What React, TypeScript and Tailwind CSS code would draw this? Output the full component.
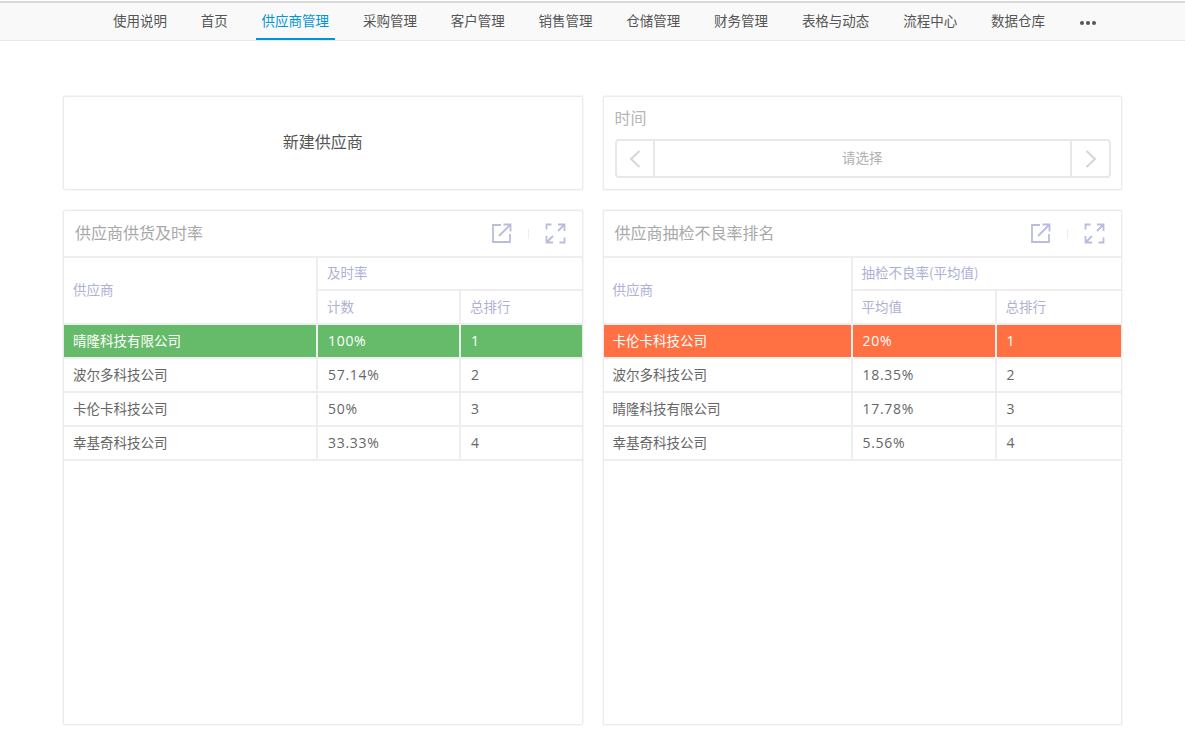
const font = { fontFamily: '"Noto Sans CJK SC", sans-serif' };
const latin = { fontFamily: '"Open Sans", sans-serif' };

const navItems = ["使用说明", "首页", "供应商管理", "采购管理", "客户管理", "销售管理", "仓储管理", "财务管理", "表格与动态", "流程中心", "数据仓库"];

function ExportIcon() {
  return (
    <svg width="21" height="21" viewBox="0 0 21 21" fill="none" stroke="#b9bddc" strokeWidth="1.800">
      <path d="M10 2H2v17h17v-8" />
      <path d="M8 13L19 2M12.500 1.500h7v7" />
    </svg>
  );
}

function ExpandIcon() {
  return (
    <svg width="21" height="21" viewBox="0 0 21 21" fill="none" stroke="#b9bddc" strokeWidth="1.800">
      <path d="M1.500 6.500v-5h5M19.500 14.500v5h-5" />
      <path d="M13 1.500h6.500V8M19 2l-6 6M1.500 13v6.500H8M2 19l6-6" />
    </svg>
  );
}

type Row = [string, string, string];

function RankCard({ title, group, sub, rows, highlight, cols }: { title: string; group: string; sub: string; rows: Row[]; highlight: string; cols: string }) {
  return (
    <section className="h-[515px] border border-[#ebebeb] shadow-[0_0_0_1px_#f7f7f7] rounded-[2px] bg-white">
      <div className="h-[45px] flex items-center justify-between pl-[11px] pr-[16px]">
        <h2 className="text-[16px] text-[#a8a8a8] font-normal pb-[4px]">{title}</h2>
        <div className="flex items-center gap-[16px]">
          <ExportIcon />
          <span className="w-px h-[10px] bg-[#eeeeee]" />
          <ExpandIcon />
        </div>
      </div>
      <div className={`grid ${cols} border-t-2 border-[#eeeeee] text-[13.500px] text-[#adb1d5]`}>
        <div className="row-span-2 flex items-center pl-[9px] pb-[2px] border-r-2 border-[#eeeeee]">供应商</div>
        <div className="col-span-2 h-[33px] flex items-center pl-[9px] pb-[2px] border-b-2 border-[#eeeeee]">{group}</div>
        <div className="h-[32px] flex items-center pl-[9px] pb-[2px] border-r-2 border-[#eeeeee]">{sub}</div>
        <div className="h-[32px] flex items-center pl-[9px] pb-[2px]">总排行</div>
      </div>
      {rows.map((r, i) => (
        <div key={r[0]} className={`grid ${cols} h-[34px] border-t-2 border-[#eeeeee] text-[13.500px] ${i === 0 ? `${highlight} text-white` : "text-[#666666]"}`}>
          <div className="flex items-center pl-[9px] pb-[2px] border-r-2 border-[#eeeeee]">{r[0]}</div>
          <div className={`flex items-center pl-[10px] pb-[2px] border-r-2 border-[#eeeeee] text-[14px] tracking-[0.7px] ${i === 0 ? "font-medium" : ""}`} style={latin}>{r[1]}</div>
          <div className={`flex items-center pl-[10px] pb-[2px] text-[14px] ${i === 0 ? "font-medium" : ""}`} style={latin}>{r[2]}</div>
        </div>
      ))}
      <div className="border-t-2 border-[#eeeeee]" />
    </section>
  );
}

export default function App() {
  return (
    <div className="min-h-[738px] bg-white" style={font}>
      <nav className="mt-px h-[40px] border-t-2 border-b border-t-[#d9d9d9] border-b-[#e9e9e9] bg-[#f9f9f9] flex items-stretch pl-[107px] gap-[21.800px] text-[13.500px] text-[#555555]">
        {navItems.map((n) => (
          <a key={n} className={`px-[6px] flex items-center pb-[1px] border-b-2 ${n === "供应商管理" ? "border-[#0095d9] text-[#0095d9]" : "border-transparent"}`}>
            {n}
          </a>
        ))}
        <span className="flex items-center gap-[2px] pl-[7px] pt-[3px]">
          <i className="size-[4px] rounded-full bg-[#555555]" />
          <i className="size-[4px] rounded-full bg-[#555555]" />
          <i className="size-[4px] rounded-full bg-[#555555]" />
        </span>
      </nav>
      <main className="px-[63px] pt-[55px] grid grid-cols-2 gap-[20px]">
        <button className="h-[94px] border border-[#ebebeb] shadow-[0_0_0_1px_#f7f7f7] rounded-[2px] bg-white text-[16px] text-[#555555] pb-[5px]">新建供应商</button>
        <section className="h-[94px] border border-[#ebebeb] shadow-[0_0_0_1px_#f7f7f7] rounded-[2px] bg-white pl-[11px] pr-[10px]">
          <div className="h-[39px] mb-[3px] flex items-center text-[16px] text-[#b5b5b5]">时间</div>
          <div className="h-[39px] border-2 border-[#e8e8e8] rounded-[4px] flex items-stretch">
            <div className="w-[38px] border-r-2 border-[#e8e8e8] flex items-center justify-center">
              <svg width="12" height="18" viewBox="0 0 12 18" fill="none" stroke="#d6d6d6" strokeWidth="2"><path d="M10.500 1L2 9l8.500 8" /></svg>
            </div>
            <div className="flex-1 flex items-center justify-center text-[13.500px] text-[#b0b0b0] pb-[2px]">请选择</div>
            <div className="w-[39px] border-l-2 border-[#e8e8e8] flex items-center justify-center">
              <svg width="12" height="18" viewBox="0 0 12 18" fill="none" stroke="#d6d6d6" strokeWidth="2"><path d="M1.500 1L10 9l-8.500 8" /></svg>
            </div>
          </div>
        </section>
        <RankCard
          title="供应商供货及时率"
          group="及时率"
          sub="计数"
          highlight="bg-[#66bb6a]"
          cols="grid-cols-[254px_143px_1fr]"
          rows={[["晴隆科技有限公司", "100%", "1"], ["波尔多科技公司", "57.14%", "2"], ["卡伦卡科技公司", "50%", "3"], ["幸基奇科技公司", "33.33%", "4"]]}
        />
        <RankCard
          title="供应商抽检不良率排名"
          group="抽检不良率(平均值)"
          sub="平均值"
          highlight="bg-[#ff7043]"
          cols="grid-cols-[249px_144px_1fr]"
          rows={[["卡伦卡科技公司", "20%", "1"], ["波尔多科技公司", "18.35%", "2"], ["晴隆科技有限公司", "17.78%", "3"], ["幸基奇科技公司", "5.56%", "4"]]}
        />
      </main>
    </div>
  );
}
